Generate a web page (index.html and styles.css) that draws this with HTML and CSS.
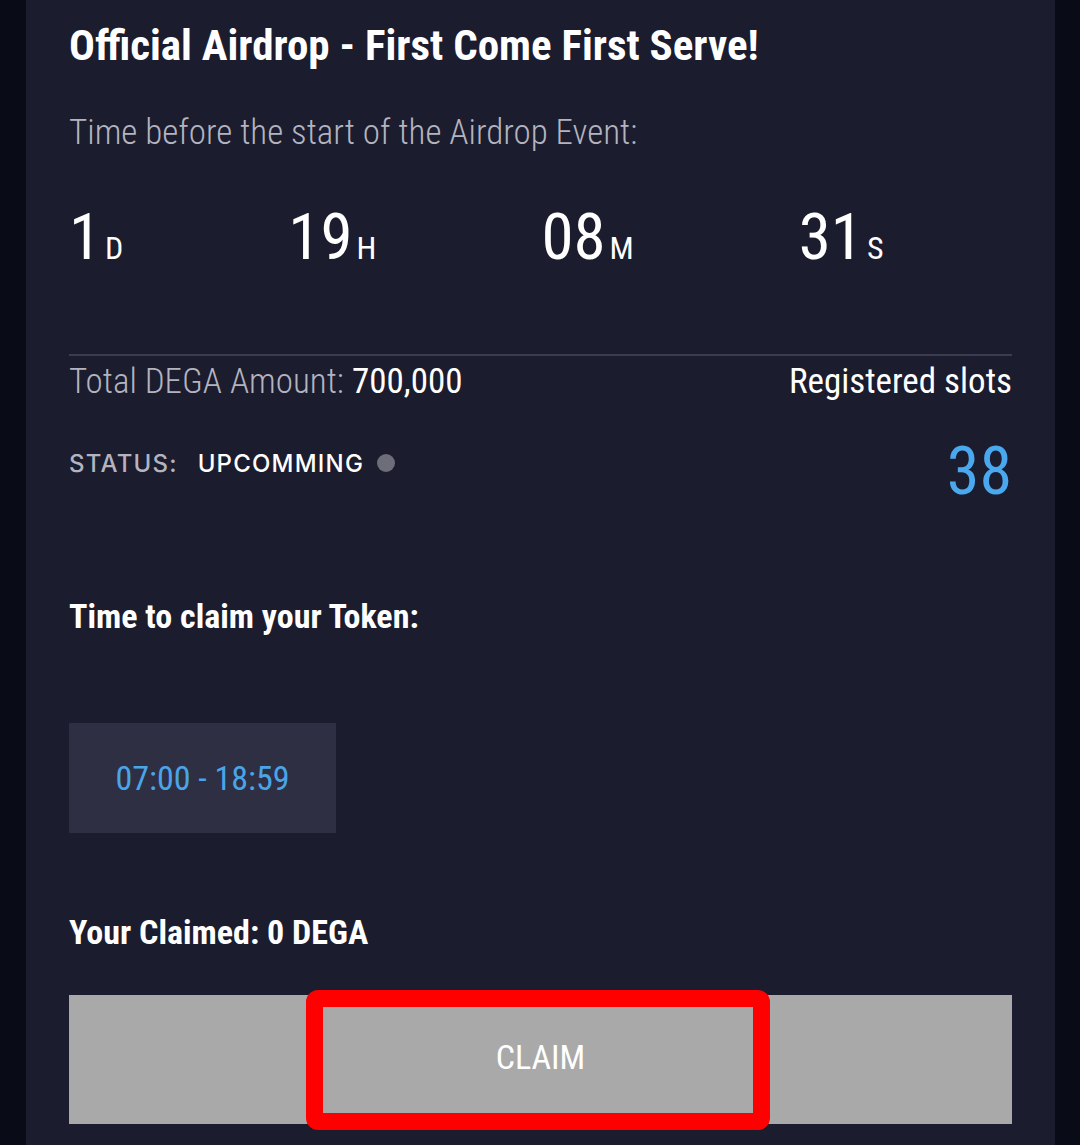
FILE: index.html
```html
<!DOCTYPE html>
<html lang="en">
<head>
<meta charset="utf-8">
<title>Official Airdrop</title>
<link rel="stylesheet" href="styles.css">
</head>
<body>
<div class="card">
  <h1 class="title">Official Airdrop - First Come First Serve!</h1>
  <p class="subtitle">Time before the start of the Airdrop Event:</p>
  <div class="countdown">
    <div class="cd-item"><span class="num">1</span><span class="unit">D</span></div>
    <div class="cd-item"><span class="num">19</span><span class="unit">H</span></div>
    <div class="cd-item"><span class="num">08</span><span class="unit">M</span></div>
    <div class="cd-item"><span class="num">31</span><span class="unit">S</span></div>
  </div>
  <div class="divider"></div>
  <div class="stats">
    <div class="stats-left">
      <div class="total"><span class="muted">Total DEGA Amount:</span> <span class="strong">700,000</span></div>
      <div class="status">
        <span class="status-label">STATUS:</span>
        <span class="status-value">UPCOMMING</span>
        <span class="dot"></span>
      </div>
    </div>
    <div class="stats-right">
      <div class="slots-label">Registered slots</div>
      <div class="slots">38</div>
    </div>
  </div>
  <h2 class="section-title claim-title">Time to claim your Token:</h2>
  <div class="time-box">07:00 - 18:59</div>
  <h2 class="section-title claimed">Your Claimed: 0 DEGA</h2>
  <div class="btn-wrap">
    <button class="claim-btn">CLAIM</button>
    <div class="highlight"></div>
  </div>
</div>
</body>
</html>
```
FILE: styles.css
```css
html, body {
  margin: 0;
  padding: 0;
}
body {
  background: #090b16;
  width: 1080px;
  height: 1145px;
  overflow: hidden;
  font-family: "Roboto Condensed", "Liberation Sans Narrow", Roboto, sans-serif;
  font-stretch: condensed;
  color: #ffffff;
}
.card {
  margin: 0 25px 0 26px;
  background: #1b1c2e;
  height: 1145px;
  padding: 19px 43px 0 43px;
  box-sizing: border-box;
}
.title {
  margin: 0;
  font-size: 43px;
  line-height: 52px;
  font-weight: 700;
  color: #ffffff;
}
.subtitle {
  margin: 40px 0 0;
  font-size: 35px;
  line-height: 44px;
  font-weight: 320;
  color: #b3b4bf;
}
.countdown {
  margin-top: 47px;
  display: flex;
  gap: 165px;
  height: 70px;
  align-items: baseline;
}
.cd-item {
  display: flex;
  align-items: baseline;
  line-height: 70px;
}
.num {
  font-size: 65px;
  font-weight: 400;
}
.unit {
  font-size: 32px;
  margin-left: 4px;
}
.divider {
  margin-top: 82px;
  height: 2px;
  background: #3b3c4f;
}
.stats {
  display: flex;
  justify-content: space-between;
  margin-top: 6px;
}
.total {
  font-size: 35px;
  line-height: 40px;
  font-weight: 400;
}
.muted {
  color: #b3b4bf;
  font-weight: 320;
}
.strong {
  color: #ffffff;
}
.status {
  margin-top: 46px;
  display: flex;
  align-items: center;
  height: 30px;
  font-family: Inter, "Noto Sans", sans-serif;
  font-stretch: normal;
  font-size: 24px;
  letter-spacing: 1.2px;
}
.status-label {
  color: #b3b4bf;
  font-weight: 500;
}
.status-value {
  margin-left: 20px;
  font-weight: 500;
  color: #ffffff;
}
.dot {
  width: 18px;
  height: 18px;
  border-radius: 50%;
  background: #6d6e7a;
  margin-left: 13px;
}
.stats-right {
  text-align: right;
}
.slots-label {
  font-size: 35px;
  line-height: 40px;
  color: #ffffff;
}
.slots {
  margin-top: 35px;
  font-size: 66px;
  line-height: 70px;
  color: #4aa8ef;
}
.section-title {
  margin: 0;
  font-size: 34px;
  line-height: 40px;
  font-weight: 700;
  color: #ffffff;
}
.claim-title {
  margin-top: 89px;
}
.time-box {
  margin-top: 87px;
  width: 267px;
  height: 110px;
  background: #2e2f42;
  display: flex;
  align-items: center;
  justify-content: center;
  font-size: 34px;
  color: #4aa5e8;
}
.claimed {
  margin-top: 79px;
}
.btn-wrap {
  position: relative;
  margin-top: 43px;
}
.claim-btn {
  display: block;
  width: 100%;
  height: 129px;
  border: 0;
  padding: 0 0 5px;
  background: #a9a9a9;
  color: #ffffff;
  font-family: "Roboto Condensed", "Liberation Sans Narrow", Roboto, sans-serif;
  font-stretch: condensed;
  font-size: 34px;
  font-weight: 400;
}
.highlight {
  position: absolute;
  left: 237px;
  top: -5px;
  width: 464px;
  height: 140px;
  box-sizing: border-box;
  border: 17px solid #ff0000;
  border-radius: 12px;
  pointer-events: none;
}
```
